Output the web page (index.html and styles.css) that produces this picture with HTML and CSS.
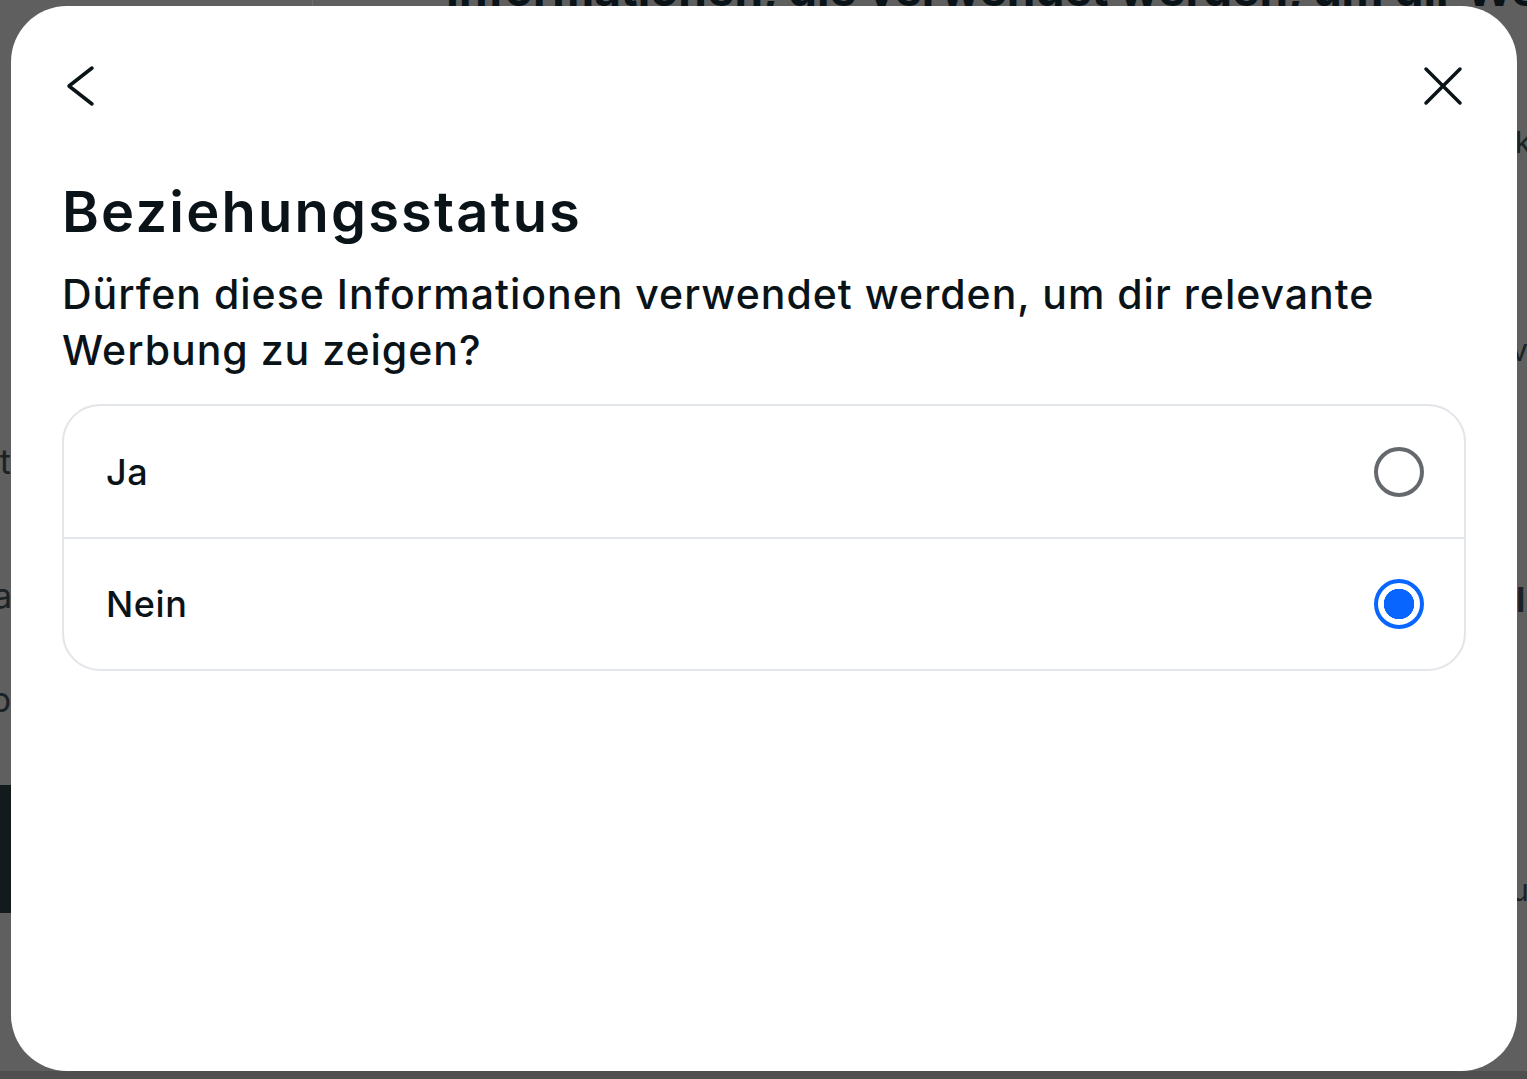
FILE: index.html
```html
<!DOCTYPE html>
<html lang="de">
<head>
<meta charset="utf-8">
<title>Beziehungsstatus</title>
<link rel="stylesheet" href="styles.css">
</head>
<body>
<div class="page">
  <div class="page-top">Informationen, die verwendet werden, um dir Werbung zu zeigen</div>
  <div class="page-middle">
    <div class="page-left">
      <div class="frag frag-l1">Kontakt</div>
      <div class="frag frag-l2">Meta</div>
      <div class="frag frag-l3">Job</div>
      <div class="page-left-block"></div>
    </div>
    <div class="page-center"></div>
    <div class="page-right">
      <div class="frag frag-r1">k</div>
      <div class="frag frag-r2">v</div>
      <div class="frag frag-r3">l</div>
      <div class="frag frag-r4">u</div>
    </div>
  </div>
  <div class="page-bottom">Werbung für Meta-Technologien</div>
</div>

<div class="modal" role="dialog" aria-labelledby="title">
  <div class="modal-header">
    <button class="icon-btn" aria-label="Zurück">
      <svg width="48" height="48" viewBox="0 0 48 48"><polyline points="35,6 12,24 35,42" fill="none" stroke="#0a1317" stroke-width="3.5" stroke-linecap="round" stroke-linejoin="round"/></svg>
    </button>
    <button class="icon-btn" aria-label="Schließen">
      <svg width="48" height="48" viewBox="0 0 48 48"><path d="M7 7 L41 41 M41 7 L7 41" fill="none" stroke="#0a1317" stroke-width="3.5" stroke-linecap="round"/></svg>
    </button>
  </div>
  <div class="modal-body">
    <h1 id="title" class="title">Beziehungsstatus</h1>
    <p class="question">Dürfen diese Informationen verwendet werden, um dir relevante Werbung zu zeigen?</p>
    <div class="options">
      <label class="option">
        <span class="option-label">Ja</span>
        <span class="radio"></span>
      </label>
      <label class="option">
        <span class="option-label">Nein</span>
        <span class="radio radio-checked"></span>
      </label>
    </div>
  </div>
</div>
</body>
</html>
```
FILE: styles.css
```css
html, body {
  margin: 0;
  padding: 0;
  height: 100%;
  overflow: hidden;
}

body {
  background: #5f5f5f;
  font-family: Inter, "Noto Sans", "Liberation Sans", sans-serif;
  color: #0a1317;
}

.page {
  height: 100%;
  display: flex;
  flex-direction: column;
}

.page-top {
  margin-top: -30px;
  margin-left: 312px;
  padding-left: 133px;
  border-left: 1px solid #6d6d6d;
  font-size: 46px;
  font-weight: 700;
  line-height: 38px;
  color: #0a1317;
  white-space: nowrap;
  overflow: hidden;
  flex: none;
}

.page-middle {
  flex: 1;
  display: flex;
}

.page-left {
  width: 11px;
  display: flex;
  flex-direction: column;
  align-items: flex-end;
  overflow: hidden;
}

.page-center {
  flex: 1;
}

.page-right {
  width: 10px;
  display: flex;
  flex-direction: column;
  align-items: flex-start;
  overflow: hidden;
}

.frag {
  font-size: 34px;
  line-height: 40px;
  color: #1b2225;
  white-space: nowrap;
}

.frag-l1 { margin-top: 434px; }
.frag-l2 { margin-top: 94px; margin-right: -1px; }
.frag-l3 { margin-top: 64px; }

.page-left-block {
  align-self: stretch;
  height: 128px;
  margin-top: 65px;
  background: #131a1c;
}

.frag-r1 { margin-top: 114px; margin-left: -2px; font-size: 30px; }
.frag-r2 { margin-top: 168px; margin-left: -6px; font-size: 30px; }
.frag-r3 { margin-top: 210px; margin-left: -1px; font-weight: 700; }
.frag-r4 { margin-top: 250px; margin-left: -6px; font-size: 30px; }

.page-bottom {
  height: 8px;
  flex: none;
  background: #4f4f4f;
  overflow: hidden;
  padding-left: 488px;
  font-size: 46px;
  font-weight: 700;
  line-height: 56px;
  color: #0a1317;
  white-space: nowrap;
}

.modal {
  position: fixed;
  left: 11px;
  top: 6px;
  width: 1506px;
  height: 1065px;
  background: #ffffff;
  border-radius: 56px;
  box-sizing: border-box;
}

.modal-header {
  display: flex;
  justify-content: space-between;
  align-items: center;
  padding: 56px 50px 0 46px;
}

.icon-btn {
  width: 48px;
  height: 48px;
  padding: 0;
  border: 0;
  background: none;
  display: flex;
  align-items: center;
  justify-content: center;
}

.modal-body {
  padding: 0 51px;
}

.title {
  margin: 70px 0 0;
  font-size: 56px;
  font-weight: 600;
  line-height: 64px;
  letter-spacing: 2.2px;
}

.question {
  margin: 22px 0 0;
  font-size: 41px;
  font-weight: 500;
  line-height: 56px;
  letter-spacing: 1px;
}

.options {
  margin-top: 26px;
  border: 2px solid #e2e5e9;
  border-radius: 38px;
  overflow: hidden;
}

.option {
  display: flex;
  align-items: center;
  justify-content: space-between;
  height: 131px;
  padding: 0 40px 0 42px;
}

.option + .option {
  border-top: 2px solid #e2e5e9;
  height: 130px;
}

.option-label {
  font-size: 36px;
  font-weight: 500;
  letter-spacing: 0.6px;
}

.radio {
  width: 50px;
  height: 50px;
  box-sizing: border-box;
  border: 4px solid #65686c;
  border-radius: 50%;
}

.radio-checked {
  border-color: #0866ff;
  background: radial-gradient(circle, #0866ff 0 15px, #ffffff 15.5px);
}
```
